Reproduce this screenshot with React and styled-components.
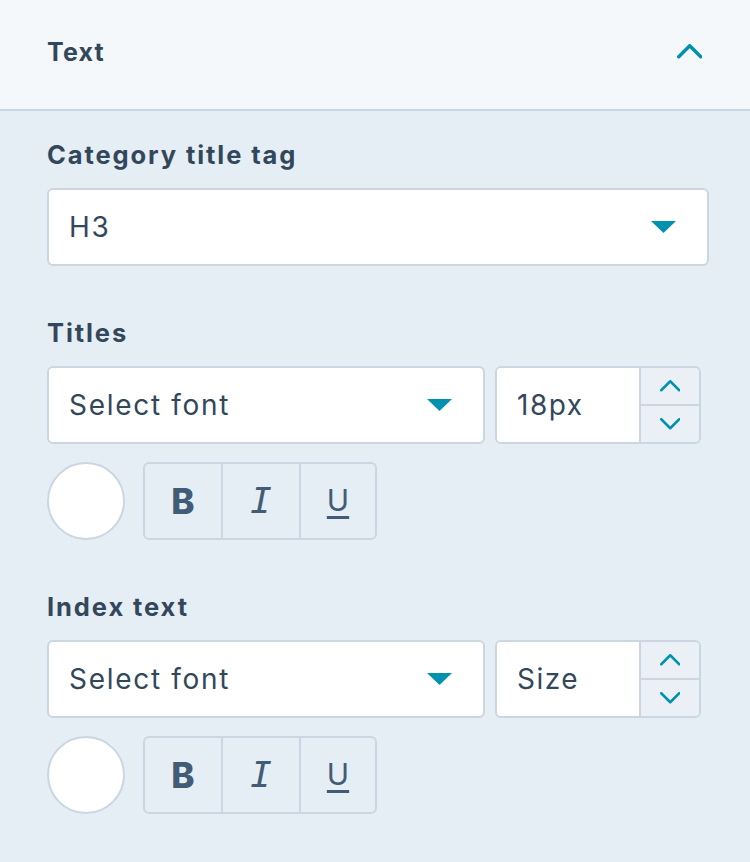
import React from 'react';
import styled, { createGlobalStyle } from 'styled-components';

const Global = createGlobalStyle`
  html, body { margin: 0; padding: 0; background: #e6eef5; }
  body { font-family: Inter, "Noto Sans", sans-serif; color: #33475b; }
  * { box-sizing: border-box; }
`;

const Panel = styled.div`
  min-height: 100vh;
  background: #e6eef5;
`;

const Header = styled.header`
  height: 111px;
  background: #f5f8fa;
  border-bottom: 2px solid #cbd6e2;
  display: flex;
  align-items: center;
  justify-content: space-between;
  padding: 0 48px 6px 47px;
`;

const HeaderTitle = styled.h2`
  margin: 0;
  font-size: 25px;
  font-weight: 700;
  letter-spacing: 1.2px;
  color: #33475b;
`;

const Body = styled.div`
  padding: 28px 41px 0 47px;
  display: flex;
  flex-direction: column;
  gap: 51px;
`;

const Section = styled.section`
  display: flex;
  flex-direction: column;
`;

const Label = styled.div`
  font-size: 25.5px;
  font-weight: 650;
  line-height: 32px;
  letter-spacing: 1.9px;
  margin-bottom: 17px;
  color: #33475b;
`;

const Select = styled.div`
  height: 78px;
  ${p => (p.$grow ? 'flex: 1;' : 'width: 100%;')}
  background: #fff;
  border: 2px solid #cbd6e2;
  border-radius: 6px;
  display: flex;
  align-items: center;
  justify-content: space-between;
  padding: 0 31px 0 20px;
  font-size: 28px;
  letter-spacing: 1.7px;
  color: #33475b;
`;

const Row = styled.div`
  display: flex;
  gap: 10px;
  width: 654px;
  margin-bottom: 18px;
`;

const SizeBox = styled.div`
  width: 206px;
  height: 78px;
  border: 2px solid #cbd6e2;
  border-radius: 6px;
  display: flex;
  overflow: hidden;
`;

const SizeInput = styled.div`
  flex: 1;
  background: #fff;
  display: flex;
  align-items: center;
  padding-left: 20px;
  font-size: 28px;
  letter-spacing: 1.5px;
  color: #33475b;
`;

const Stepper = styled.div`
  width: 60px;
  border-left: 2px solid #cbd6e2;
  display: flex;
  flex-direction: column;
  background: #eaf0f6;
`;

const StepButton = styled.div`
  flex: 1;
  display: flex;
  align-items: center;
  justify-content: center;
  & + & { border-top: 2px solid #cbd6e2; }
`;

const StyleRow = styled.div`
  display: flex;
  gap: 18px;
  align-items: center;
`;

const Swatch = styled.div`
  width: 78px;
  height: 78px;
  border-radius: 50%;
  background: #fff;
  border: 2px solid #cbd6e2;
`;

const ToggleGroup = styled.div`
  display: flex;
  border: 2px solid #cbd6e2;
  border-radius: 6px;
  height: 78px;
`;

const Toggle = styled.div`
  width: ${p => p.$w}px;
  display: flex;
  align-items: center;
  justify-content: center;
  color: #425b76;
  & + & { border-left: 2px solid #cbd6e2; }
`;

const BoldMark = styled.span`
  font-family: Inter, sans-serif;
  font-size: 35px;
  font-weight: 800;
  line-height: 1;
`;

const ItalicMark = styled.span`
  font-family: "DejaVu Sans Mono", monospace;
  font-style: oblique;
  font-size: 36px;
  line-height: 1;
`;

const UnderlineMark = styled.span`
  font-family: Inter, sans-serif;
  font-size: 30px;
  line-height: 1;
  text-decoration: underline;
  text-decoration-thickness: 3px;
  text-underline-offset: 5px;
  margin-top: -2px;
`;

const Caret = () => (
  <svg width="25" height="12" viewBox="0 0 25 12">
    <path d="M0 0 H25 L12.5 12 Z" fill="#0091ae" />
  </svg>
);

const Chevron = ({ up, w = 18, h = 9, sw = 2.5 }) => (
  <svg width={w + sw} height={h + sw} viewBox={`${-sw / 2} ${-sw / 2} ${w + sw} ${h + sw}`}>
    <path
      d={up ? `M0 ${h} L${w / 2} 0 L${w} ${h}` : `M0 0 L${w / 2} ${h} L${w} 0`}
      fill="none"
      stroke="#0091ae"
      strokeWidth={sw}
      strokeLinecap="round"
      strokeLinejoin="round"
    />
  </svg>
);

const FontControls = ({ size }) => (
  <>
    <Row>
      <Select $grow>
        <span>Select font</span>
        <Caret />
      </Select>
      <SizeBox>
        <SizeInput>{size}</SizeInput>
        <Stepper>
          <StepButton><Chevron up /></StepButton>
          <StepButton><Chevron /></StepButton>
        </Stepper>
      </SizeBox>
    </Row>
    <StyleRow>
      <Swatch />
      <ToggleGroup>
        <Toggle $w={76}><BoldMark>B</BoldMark></Toggle>
        <Toggle $w={78}><ItalicMark>I</ItalicMark></Toggle>
        <Toggle $w={76}><UnderlineMark>U</UnderlineMark></Toggle>
      </ToggleGroup>
    </StyleRow>
  </>
);

export default function App() {
  return (
    <Panel>
      <Global />
      <Header>
        <HeaderTitle>Text</HeaderTitle>
        <Chevron up w={22} h={11} sw={3.5} />
      </Header>
      <Body>
        <Section>
          <Label>Category title tag</Label>
          <Select>
            <span>H3</span>
            <Caret />
          </Select>
        </Section>
        <Section>
          <Label>Titles</Label>
          <FontControls size="18px" />
        </Section>
        <Section>
          <Label>Index text</Label>
          <FontControls size="Size" />
        </Section>
      </Body>
    </Panel>
  );
}
